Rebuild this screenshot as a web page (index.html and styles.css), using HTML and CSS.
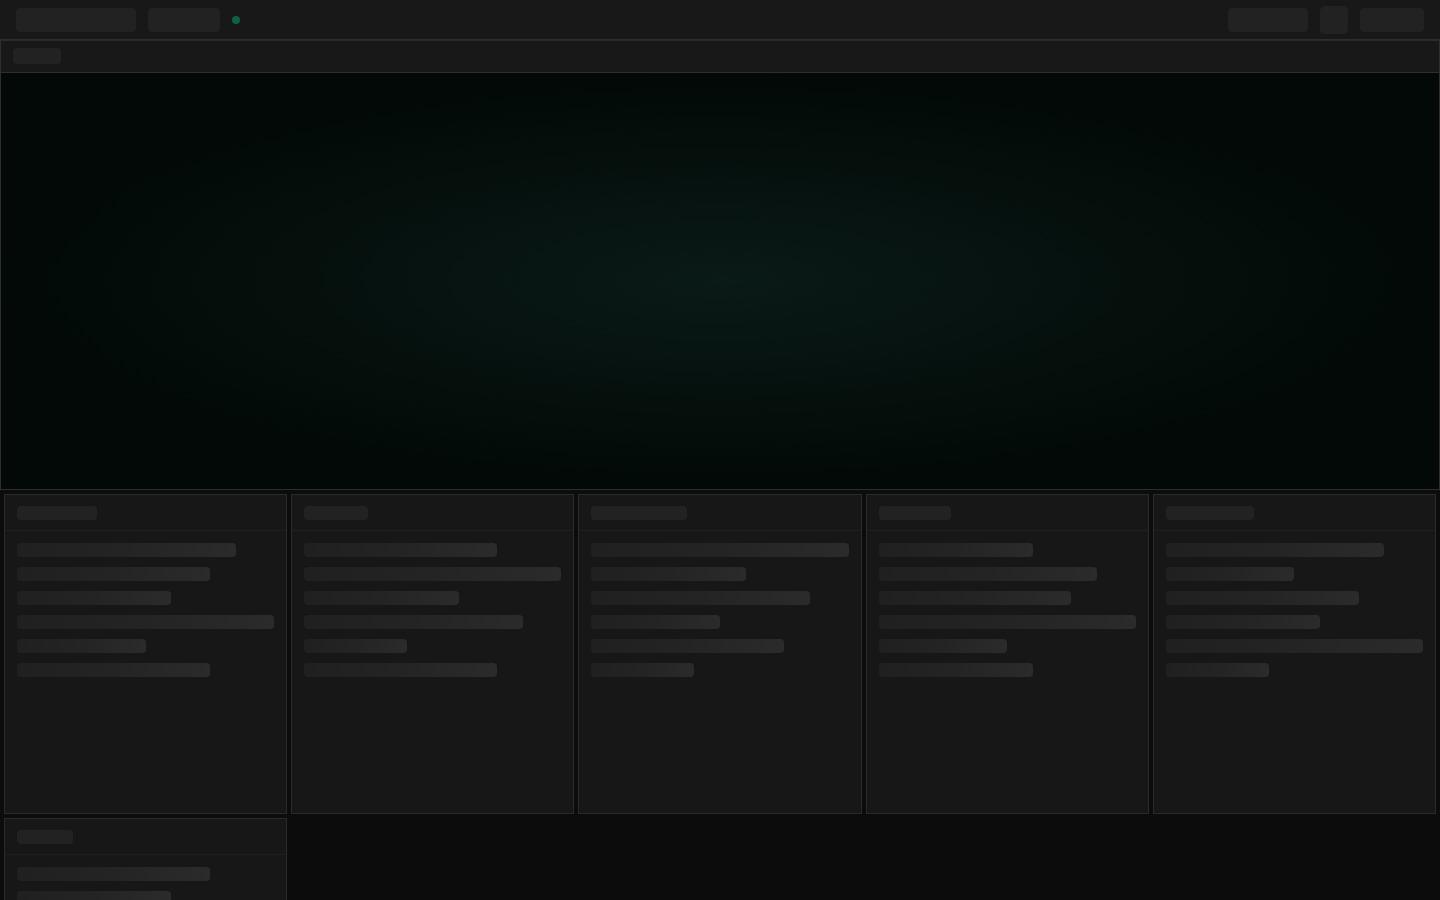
FILE: index.html
```html
<!DOCTYPE html>
<html lang="en">
<head>
<meta charset="utf-8">
<title>Loading</title>
<link rel="stylesheet" href="styles.css">
</head>
<body>
<header class="topbar">
  <div class="topbar-left">
    <div class="sk sk-logo"></div>
    <div class="sk sk-tab"></div>
    <span class="status-dot"></span>
  </div>
  <div class="topbar-right">
    <div class="sk sk-btn-a"></div>
    <div class="sk sk-square"></div>
    <div class="sk sk-btn-b"></div>
  </div>
</header>

<section class="panel">
  <div class="panel-bar">
    <div class="sk sk-chip"></div>
  </div>
  <div class="hero"></div>
</section>

<main class="grid">
  <div class="card">
    <div class="card-head"><div class="sk sk-title w80"></div></div>
    <div class="card-body">
      <div class="line p85"></div><div class="line p75"></div><div class="line p60"></div>
      <div class="line p100"></div><div class="line p50"></div><div class="line p75"></div>
    </div>
  </div>
  <div class="card">
    <div class="card-head"><div class="sk sk-title w64"></div></div>
    <div class="card-body">
      <div class="line p75"></div><div class="line p100"></div><div class="line p60"></div>
      <div class="line p85"></div><div class="line p40"></div><div class="line p75"></div>
    </div>
  </div>
  <div class="card">
    <div class="card-head"><div class="sk sk-title w96"></div></div>
    <div class="card-body">
      <div class="line p100"></div><div class="line p60"></div><div class="line p85"></div>
      <div class="line p50"></div><div class="line p75"></div><div class="line p40"></div>
    </div>
  </div>
  <div class="card">
    <div class="card-head"><div class="sk sk-title w72"></div></div>
    <div class="card-body">
      <div class="line p60"></div><div class="line p85"></div><div class="line p75"></div>
      <div class="line p100"></div><div class="line p50"></div><div class="line p60"></div>
    </div>
  </div>
  <div class="card">
    <div class="card-head"><div class="sk sk-title w88"></div></div>
    <div class="card-body">
      <div class="line p85"></div><div class="line p50"></div><div class="line p75"></div>
      <div class="line p60"></div><div class="line p100"></div><div class="line p40"></div>
    </div>
  </div>
  <div class="card">
    <div class="card-head"><div class="sk sk-title w56"></div></div>
    <div class="card-body">
      <div class="line p75"></div><div class="line p60"></div><div class="line p85"></div>
      <div class="line p50"></div><div class="line p100"></div><div class="line p60"></div>
    </div>
  </div>
</main>
</body>
</html>
```

FILE: styles.css
```css
* { box-sizing: border-box; }

html, body {
  margin: 0;
  padding: 0;
  background: #0c0c0c;
  font-family: "Inter", "Liberation Sans", sans-serif;
  overflow: hidden;
  height: 900px;
}

.sk {
  background: #222222;
  border-radius: 4px;
}

/* Top bar */
.topbar {
  height: 40px;
  background: #181818;
  border-bottom: 1px solid #2e2e2e;
  display: flex;
  align-items: center;
  justify-content: space-between;
  padding: 0 16px;
}
.topbar-left, .topbar-right {
  display: flex;
  align-items: center;
  gap: 12px;
}
.sk-logo { width: 120px; height: 24px; }
.sk-tab { width: 72px; height: 24px; }
.status-dot {
  width: 8px;
  height: 8px;
  border-radius: 50%;
  background: #0f6049;
}
.sk-btn-a { width: 80px; height: 24px; }
.sk-square { width: 28px; height: 28px; border-radius: 5px; }
.sk-btn-b { width: 64px; height: 24px; }

/* Panel */
.panel {
  border: 1px solid #2e2e2e;
  border-top-color: #2a2a2a;
}
.panel-bar {
  height: 32px;
  background: #181818;
  border-bottom: 1px solid #2e2e2e;
  display: flex;
  align-items: center;
  padding: 0 12px 1px;
}
.sk-chip { width: 48px; height: 16px; }

.hero {
  height: 416px;
  background:
    radial-gradient(ellipse 50% 50% at 50% 50%, #0a1a16 0%, #071411 35%, #040e0b 70%, #020907 100%);
}

/* Cards grid */
.grid {
  display: grid;
  grid-template-columns: repeat(5, 1fr);
  gap: 4px;
  padding: 4px;
}
.card {
  height: 320px;
  background: #171717;
  border: 1px solid #2a2a2a;
}
.card-head {
  height: 36px;
  padding: 11px 12px 0;
  border-bottom: 1px solid #1f1f1f;
}
.sk-title { height: 14px; }
.w56 { width: 56px; }
.w64 { width: 64px; }
.w72 { width: 72px; }
.w80 { width: 80px; }
.w88 { width: 88px; }
.w96 { width: 96px; }

.card-body {
  padding: 12px;
  display: flex;
  flex-direction: column;
  gap: 10px;
}
.line {
  height: 14px;
  border-radius: 4px;
  background: linear-gradient(90deg, #202020 0%, #242424 50%, #2b2b2b 100%);
}
.p40 { width: 40%; }
.p50 { width: 50%; }
.p60 { width: 60%; }
.p75 { width: 75%; }
.p85 { width: 85%; }
.p100 { width: 100%; }
```
